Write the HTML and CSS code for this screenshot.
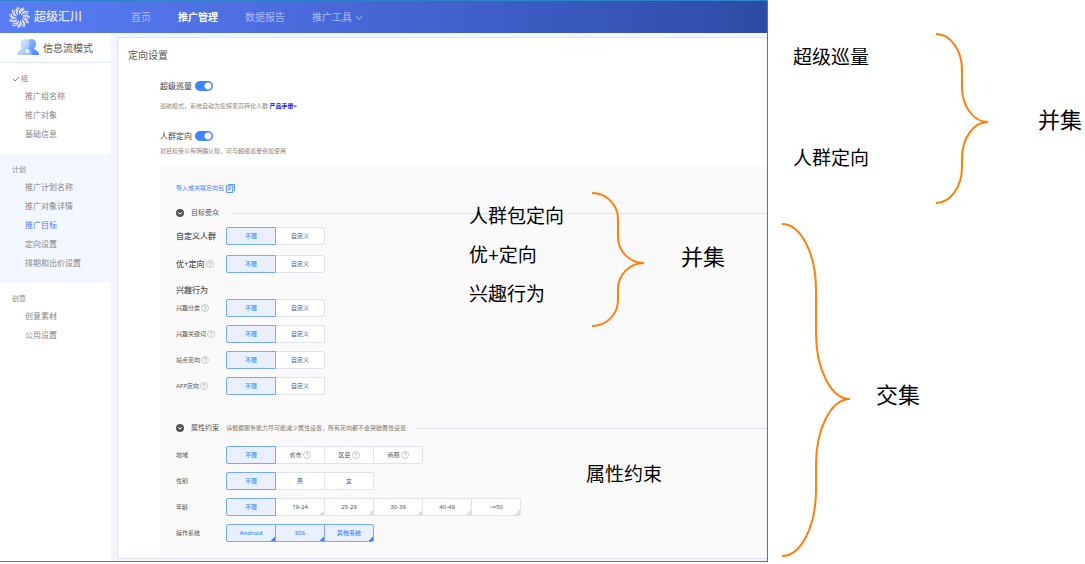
FILE: index.html
```html
<!DOCTYPE html>
<html lang="zh-CN">
<head>
<meta charset="utf-8">
<title>超级汇川 - 定向设置</title>
<link rel="stylesheet" href="styles.css">
</head>
<body>
<svg class="defs" aria-hidden="true">
  <symbol id="help" viewBox="0 0 16 16"><circle cx="8" cy="8" r="7" fill="none" stroke="currentColor"/><path d="M5.8 6.4a2.2 2.2 0 1 1 3.2 2c-.8.4-1 .8-1 1.5M8 11.2v1.2" fill="none" stroke="currentColor" stroke-width="1.3"/></symbol>
  <symbol id="fold" viewBox="0 0 16 16"><circle cx="8" cy="8" r="8" fill="#555"/><path d="M4.2 6.8 8 10l3.800-3.200" fill="none" stroke="#fff" stroke-width="2"/></symbol>
</svg>
<div class="board">
  <div class="app">
    <header class="topbar">
      <a class="brand" href="#">
        <svg class="brand-logo" viewBox="0 0 40 40" fill="none" stroke="#e3eaff" stroke-width="2" stroke-linecap="round">
          <defs><path id="petal" d="M20 13C19 8 22 3 28 2M20 13C21 9 24 6 28.500 5"/></defs>
          <use href="#petal"/><use href="#petal" transform="rotate(32.700 20 20)"/><use href="#petal" transform="rotate(65.500 20 20)"/><use href="#petal" transform="rotate(98.200 20 20)"/><use href="#petal" transform="rotate(130.900 20 20)"/><use href="#petal" transform="rotate(163.600 20 20)"/><use href="#petal" transform="rotate(196.400 20 20)"/><use href="#petal" transform="rotate(229.100 20 20)"/><use href="#petal" transform="rotate(261.800 20 20)"/><use href="#petal" transform="rotate(294.500 20 20)"/><use href="#petal" transform="rotate(327.300 20 20)"/>
        </svg>
        <span>超级汇川</span>
      </a>
      <nav class="nav">
        <a href="#">首页</a>
        <a class="active" href="#">推广管理</a>
        <a href="#">数据报告</a>
        <a href="#">推广工具 <svg class="caret" viewBox="0 0 8 6"><path d="M1 1l3 3.500L7 1" fill="none" stroke="currentColor"/></svg></a>
      </nav>
    </header>
    <div class="workspace">
      <aside class="sidebar">
        <div class="mode">
          <svg class="mode-icon" viewBox="0 0 22 19">
            <defs>
              <linearGradient id="back" x1="0" y1="0" x2="1" y2="1"><stop offset="0" stop-color="#9cc3ff"/><stop offset="1" stop-color="#3f82f8"/></linearGradient>
              <linearGradient id="front" x1="0" y1="0" x2="1" y2="1"><stop offset="0" stop-color="#e4f0ff"/><stop offset="1" stop-color="#8bb8ff"/></linearGradient>
            </defs>
            <path fill="url(#back)" d="M11 2q1-1 3-1 5 0 5 5 0 3-2 5l3 2q2 1 2 4H9z"/>
            <path fill="url(#front)" d="M3.500 6Q3.500 1 8 1t4.500 5q0 3-2 5l4 3v3H1q-1 0-1-1 0-3 5-5-1.500-2-1.500-5z"/>
            <circle cx="10.500" cy="13" r="2" fill="#e9f3ff"/>
          </svg>
          <span>信息流模式</span>
        </div>
        <section class="group">
          <h2><svg class="tick" viewBox="0 0 8 6"><path d="M1 3l2 2 4-4" fill="none" stroke="currentColor"/></svg>组</h2>
          <a href="#">推广组名称</a><a href="#">推广对象</a><a href="#">基础信息</a>
        </section>
        <section class="group current">
          <h2>计划</h2>
          <a href="#">推广计划名称</a><a href="#">推广对象详情</a><a class="active" href="#">推广目标</a><a href="#">定向设置</a><a href="#">排期和出价设置</a>
        </section>
        <section class="group">
          <h2>创意</h2>
          <a href="#">创意素材</a><a href="#">公用设置</a>
        </section>
      </aside>
      <main class="card">
        <h1>定向设置</h1>
        <div class="settings">
          <label class="switch-row first">超级巡量<input class="switch" type="checkbox" checked></label>
          <p class="hint first">巡航模式，系统自动为您探索高转化人群 <a href="#">产品手册&gt;</a></p>
          <label class="switch-row second">人群定向<input class="switch" type="checkbox" checked></label>
          <p class="hint second">对目标受众有明确认知，可与超级巡量叠加使用</p>
          <div class="panel">
            <a class="import" href="#">导入或关联定向包<svg class="copy" viewBox="0 0 10 10"><path d="M3 2V.500h6.500v7H8M.500 2h7v7.500h-7zM2 4.500h4M2 6.500h3" fill="none" stroke="currentColor"/></svg></a>
            <div class="section-head"><svg class="fold"><use href="#fold"/></svg><h3>目标受众</h3></div>
            <div class="rows audience">
              <div class="row strong"><span class="name" id="n1">自定义人群</span><div class="seg" role="group" aria-labelledby="n1"><label><input type="radio" name="r1" checked>不限</label><label><input type="radio" name="r1">自定义</label></div></div>
              <div class="row strong"><span class="name" id="n2">优+定向<svg class="help"><use href="#help"/></svg></span><div class="seg" role="group" aria-labelledby="n2"><label><input type="radio" name="r2" checked>不限</label><label><input type="radio" name="r2">自定义</label></div></div>
            </div>
            <h4>兴趣行为</h4>
            <div class="rows">
              <div class="row"><span class="name" id="n3">兴趣分类<svg class="help"><use href="#help"/></svg></span><div class="seg" role="group" aria-labelledby="n3"><label><input type="radio" name="r3" checked>不限</label><label><input type="radio" name="r3">自定义</label></div></div>
              <div class="row"><span class="name" id="n4">兴趣关键词<svg class="help"><use href="#help"/></svg></span><div class="seg" role="group" aria-labelledby="n4"><label><input type="radio" name="r4" checked>不限</label><label><input type="radio" name="r4">自定义</label></div></div>
              <div class="row"><span class="name" id="n5">站点定向<svg class="help"><use href="#help"/></svg></span><div class="seg" role="group" aria-labelledby="n5"><label><input type="radio" name="r5" checked>不限</label><label><input type="radio" name="r5">自定义</label></div></div>
              <div class="row"><span class="name" id="n6">APP定向<svg class="help"><use href="#help"/></svg></span><div class="seg" role="group" aria-labelledby="n6"><label><input type="radio" name="r6" checked>不限</label><label><input type="radio" name="r6">自定义</label></div></div>
            </div>
            <div class="section-head attributes"><svg class="fold"><use href="#fold"/></svg><h3>属性约束</h3><p>请根据服务能力尽可能减少属性设置，所有定向都不会突破属性设置</p></div>
            <div class="rows constraints">
              <div class="row"><span class="name" id="n7">地域</span><div class="seg" role="group" aria-labelledby="n7"><label><input type="radio" name="r7" checked>不限</label><label><input type="radio" name="r7">省市<svg class="help"><use href="#help"/></svg></label><label><input type="radio" name="r7">区县<svg class="help"><use href="#help"/></svg></label><label><input type="radio" name="r7">商圈<svg class="help"><use href="#help"/></svg></label></div></div>
              <div class="row"><span class="name" id="n8">性别</span><div class="seg" role="group" aria-labelledby="n8"><label><input type="radio" name="r8" checked>不限</label><label><input type="radio" name="r8">男</label><label><input type="radio" name="r8">女</label></div></div>
              <div class="row"><span class="name" id="n9">年龄</span><div class="seg" role="group" aria-labelledby="n9"><label><input type="checkbox" checked>不限</label><label class="multi"><input type="checkbox">19-24</label><label class="multi"><input type="checkbox">25-29</label><label class="multi"><input type="checkbox">30-39</label><label class="multi"><input type="checkbox">40-49</label><label class="multi"><input type="checkbox">&gt;=50</label></div></div>
              <div class="row"><span class="name" id="n10">操作系统</span><div class="seg" role="group" aria-labelledby="n10"><label class="multi"><input type="checkbox" checked>Android</label><label class="multi"><input type="checkbox" checked>IOS</label><label class="multi"><input type="checkbox" checked>其他系统</label></div></div>
            </div>
          </div>
        </div>
      </main>
    </div>
    <div class="overlay audience-note">
      <ul class="note-list"><li>人群包定向</li><li>优+定向</li><li>兴趣行为</li></ul>
      <svg class="brace" width="54" height="136" viewBox="-1 -1 54 136"><path d="M0 0A26 26 0 0 1 26 26V44A26 26 0 0 0 52 70A26 26 0 0 0 26 96V107A26 26 0 0 1 0 133"/></svg>
      <strong class="result">并集</strong>
    </div>
    <div class="overlay attribute-note">属性约束</div>
  </div>
  <aside class="notes">
    <div class="relation union">
      <ul class="note-list"><li>超级巡量</li><li>人群定向</li></ul>
      <svg class="brace" width="54" height="171" viewBox="-1 -1 54 171"><path d="M0 0A26 36 0 0 1 26 36V53A26 35 0 0 0 52 88A26 36 0 0 0 26 124V133A26 36 0 0 1 0 169"/></svg>
      <strong class="result">并集</strong>
    </div>
    <div class="relation intersection">
      <svg class="brace" width="70" height="334" viewBox="-1 -1 70 334"><path d="M0 0A34 66 0 0 1 34 66V109A34 66 0 0 0 68 175A34 66 0 0 0 34 241V266A34 66 0 0 1 0 332"/></svg>
      <strong class="result">交集</strong>
    </div>
  </aside>
</div>
</body>
</html>
```

FILE: styles.css
```css
* { box-sizing: border-box; }
body { margin: 0; background: #fff; color: #555; font: 8px/12px "Noto Sans", "Noto Sans CJK SC", sans-serif; font-variant-ligatures: none; }
h1, h2, h3, h4, p, ul { margin: 0; padding: 0; font-weight: 400; }
li { list-style: none; }
a { color: inherit; text-decoration: none; }
svg { flex: none; }
.defs { display: none; }

.board { display: grid; grid-template-columns: minmax(0, 768fr) minmax(0, 317fr); }
.app { position: relative; border: solid #2b83c8; border-width: 1px 1px 1px 0; background: #f3f6fd; }

.topbar { display: flex; align-items: center; height: 32px; padding-left: 9px; background: linear-gradient(90deg, #5a7df5, #4868d8 45%, #2d4ba5); color: #a9baf8; font-size: 10px; }
.brand { display: flex; align-items: center; gap: 4px; width: 122px; color: #e3eaff; font-size: 12px; font-weight: 500; }
.brand-logo { width: 21px; height: 21px; }
.nav { display: flex; gap: 27px; white-space: nowrap; }
.nav .active { color: #fff; font-weight: 700; }
.caret { width: 8px; height: 6px; }

.workspace { display: grid; grid-template-columns: 111px minmax(0, 1fr); column-gap: 6px; }
.sidebar { background: #fff; }
.mode { display: flex; align-items: center; gap: 4px; height: 30px; padding-left: 17px; border-bottom: 1px solid #e3e8f5; font-size: 10px; }
.mode-icon { width: 22px; height: 19px; }
.group { padding: 10px 0 11px 12px; color: #858585; }
.group h2 { display: flex; align-items: center; gap: 1px; margin-bottom: 1px; font-size: 7px; line-height: 12px; }
.tick { width: 8px; height: 6px; }
.group a { display: block; padding-left: 13px; line-height: 19px; }
.group.current { background: #f3f7ff; }
.group .active { color: #3f7dfa; }

.card { margin: 4px 0 2px; border: solid #dfe3f0; border-width: 1px 0 1px 1px; background: #fff; }
.card h1 { padding: 10px 0 0 10px; font-size: 10px; line-height: 14px; }
.settings { padding-left: 42px; }
.switch-row { display: flex; align-items: center; gap: 3px; color: #444; }
.switch-row.first { margin-top: 18px; }
.switch-row.second { margin-top: 20px; }
.switch { appearance: none; width: 18px; height: 10px; margin: 0; border-radius: 5px; background: radial-gradient(circle at 13px 5px, #fff 3px, #3f85fa 4px); }
.hint { color: #858585; font-size: 6px; line-height: 8px; }
.hint.first { margin-top: 10px; }
.hint.second { margin-top: 5px; }
.hint a { color: #2222ee; font-weight: 700; }

.panel { margin-top: 11px; padding: 16px 0 16px 16px; background: #fafafa; }
.import { display: flex; align-items: center; gap: 2px; color: #3f85fa; font-size: 6px; }
.copy { width: 9px; height: 9px; }
.section-head { display: flex; align-items: center; gap: 7px; margin-top: 13px; }
.section-head::after { content: ""; flex: 1; height: 1px; margin-left: 4px; background: #e2e3ea; }
.section-head h3 { font-size: 7px; }
.section-head p { color: #777; font-size: 6px; }
.section-head.attributes { margin-top: 27px; }
.fold { width: 8px; height: 8px; }
.help { width: 8px; height: 8px; margin-left: 1px; color: #999; }
.rows { display: grid; gap: 8px; }
.rows.audience { gap: 10px; margin-top: 8px; }
.rows.constraints { margin-top: 12px; }
.row { display: flex; align-items: center; font-size: 6px; }
.name { display: flex; align-items: center; width: 50px; white-space: nowrap; }
.row.strong .name { font-size: 8px; font-weight: 500; }
.panel h4 { margin: 11px 0 3px; font-size: 8px; font-weight: 500; }
.seg { display: flex; }
.seg label { position: relative; display: flex; align-items: center; justify-content: center; width: 50px; height: 18px; margin-right: -1px; border: 1px solid #e2e3ea; background: #fff; }
.seg label:first-child { border-radius: 2px 0 0 2px; }
.seg label:last-child { border-radius: 0 2px 2px 0; }
.seg input { position: absolute; inset: 0; margin: 0; appearance: none; }
.seg label:has(:checked) { z-index: 1; border-color: #75a7fb; background: #e9f0fc; color: #3f85fa; font-weight: 500; }
.multi::after { content: ""; position: absolute; right: 0; bottom: 0; width: 5px; height: 5px; background: linear-gradient(135deg, transparent 50%, #dcdcec 50%); }
.multi:has(:checked)::after { background: linear-gradient(135deg, transparent 50%, #3f85fa 50%); }

.brace path { fill: none; stroke: #ff7f0e; stroke-width: 2; }
.note-list { color: #000; font-size: 19px; line-height: 26px; white-space: nowrap; }
.result { color: #000; font-size: 22px; font-weight: 400; line-height: 28px; white-space: nowrap; }
.overlay { position: absolute; z-index: 2; }
.audience-note { top: 191px; left: 469px; display: flex; align-items: center; gap: 36px; }
.audience-note .note-list { display: grid; gap: 13px; width: 86px; padding-bottom: 10px; }
.audience-note .result { padding-bottom: 8px; }
.attribute-note { top: 460px; left: 586px; color: #000; font-size: 19px; line-height: 26px; }

.notes { padding-top: 33px; }
.relation { display: flex; align-items: center; }
.union { padding-left: 25px; }
.union .note-list { display: grid; gap: 75px; margin-right: 66px; padding-bottom: 22px; }
.union .result { margin-left: 49px; }
.intersection { margin-top: 19px; padding-left: 13px; }
.intersection .result { margin-left: 25px; padding-top: 8px; }
```
